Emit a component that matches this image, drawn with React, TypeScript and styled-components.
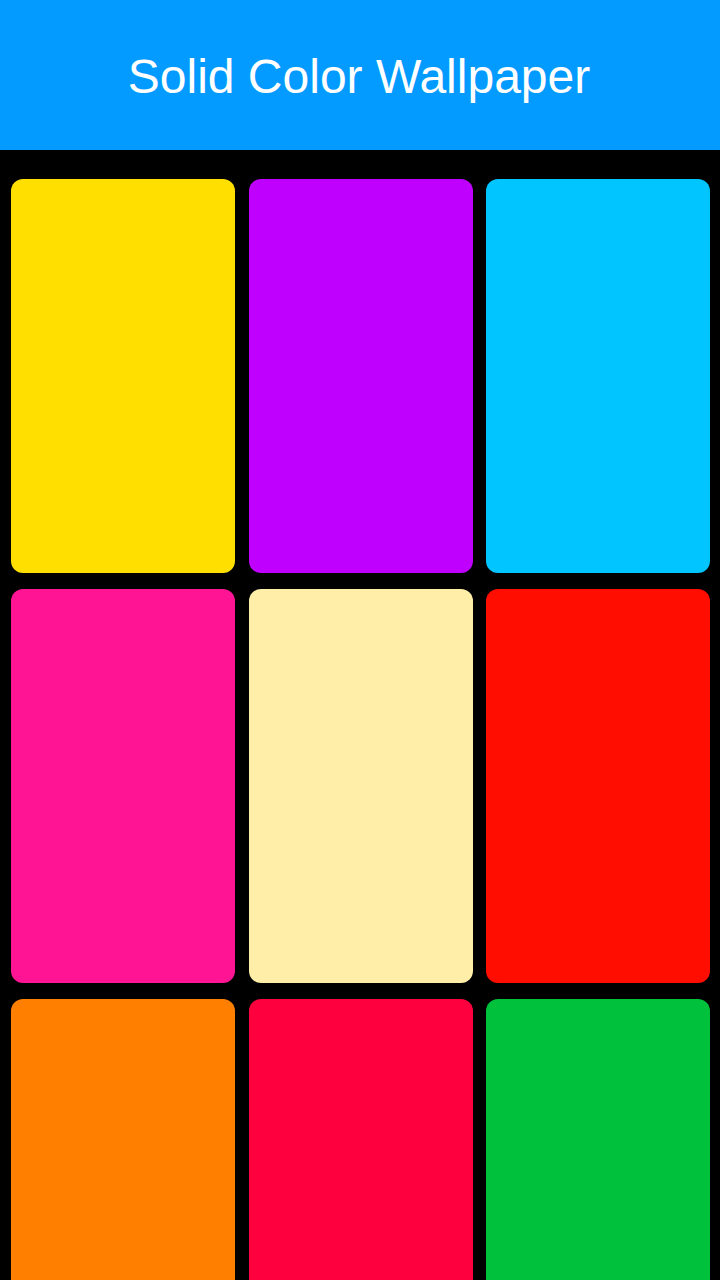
import { createGlobalStyle, styled } from 'styled-components'

const GlobalStyle = createGlobalStyle`
  html, body {
    margin: 0;
    padding: 0;
    background: #000;
    font-family: "Liberation Sans", Arial, sans-serif;
  }
  body {
    overflow: hidden;
  }
`

const Page = styled.div`
  width: 720px;
  min-height: 1280px;
  background: #000;
`

const Header = styled.header`
  height: 150px;
  background: #039bff;
  display: flex;
  align-items: center;
  justify-content: center;
`

const Title = styled.h1`
  margin: 4px 2px 0 0;
  color: #fff;
  font-size: 48px;
  font-weight: 400;
  line-height: 1;
`

const Grid = styled.div`
  display: grid;
  grid-template-columns: repeat(3, 224px);
  column-gap: 13.5px;
  row-gap: 16px;
  padding: 29px 0 0 11px;
`

const Swatch = styled.div<{ $color: string }>`
  height: 394px;
  border-radius: 12px;
  background: ${(p) => p.$color};
  cursor: pointer;
`

const colors = [
  '#ffdf00',
  '#bf00ff',
  '#00c5ff',
  '#ff1493',
  '#ffeea8',
  '#ff0d00',
  '#ff7f00',
  '#ff003f',
  '#00c13c',
]

export default function App() {
  return (
    <>
      <GlobalStyle />
      <Page>
        <Header>
          <Title>Solid Color Wallpaper</Title>
        </Header>
        <Grid>
          {colors.map((c) => (
            <Swatch key={c} $color={c} />
          ))}
        </Grid>
      </Page>
    </>
  )
}
